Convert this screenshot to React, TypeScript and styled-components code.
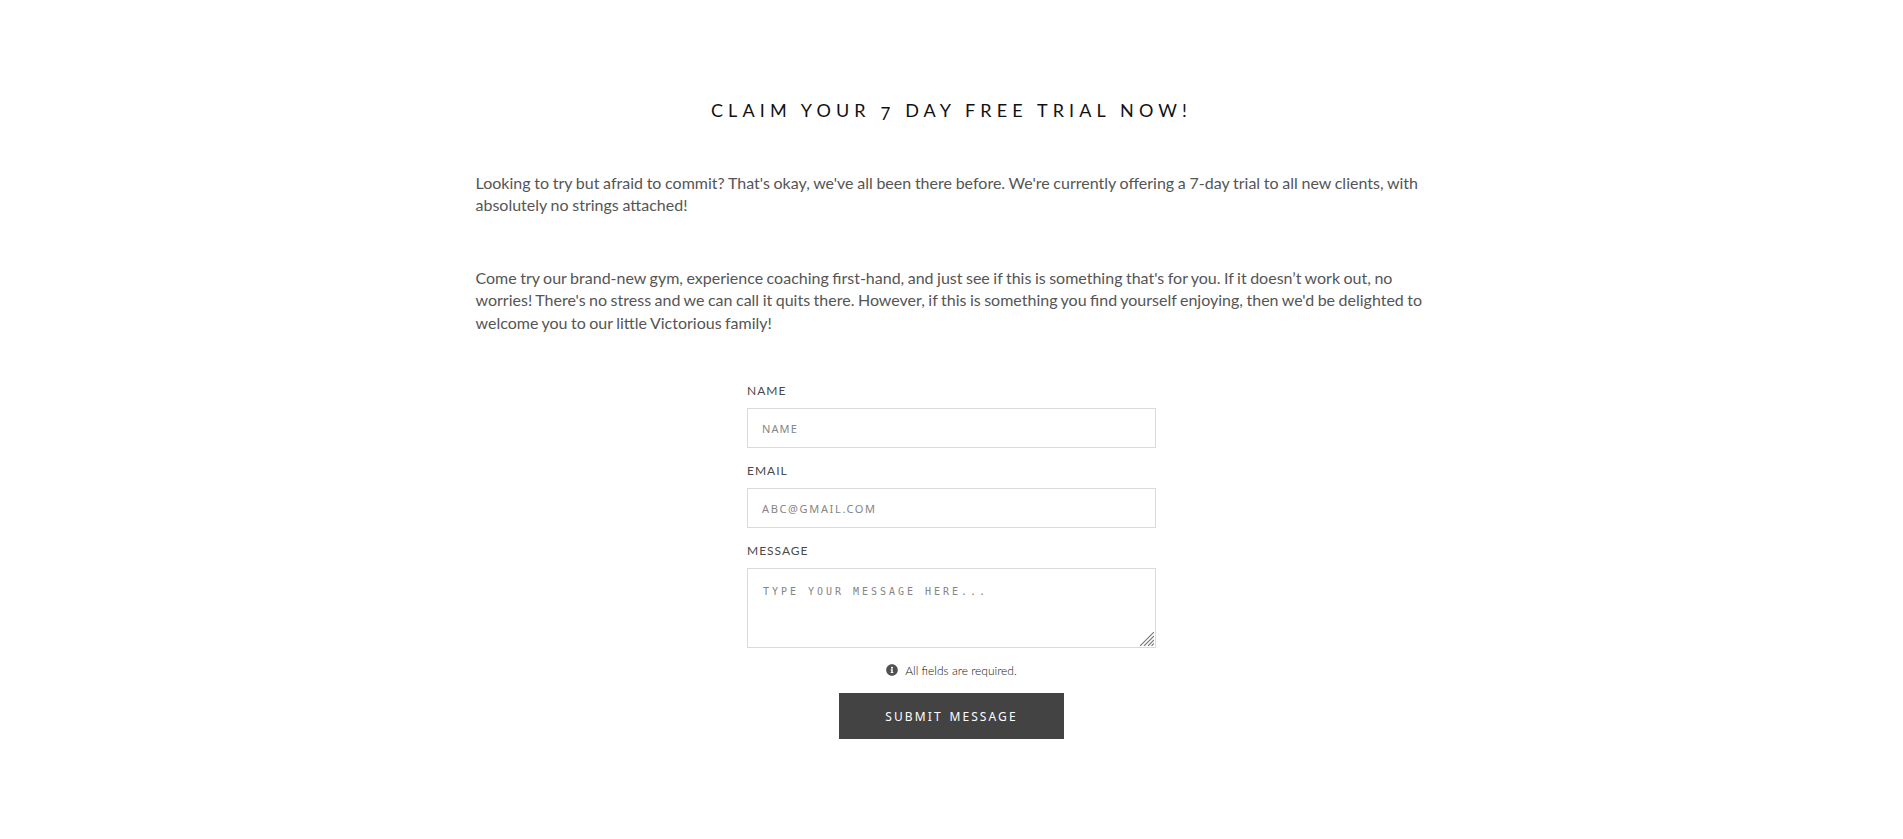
import React from "react";
import styled, { createGlobalStyle } from "styled-components";
import { FaInfoCircle } from "react-icons/fa";

const GlobalStyle = createGlobalStyle`
  body {
    margin: 0;
    background: #fff;
    color: #555;
    font-family: Lato, "Liberation Sans", sans-serif;
  }
  *, *::before, *::after { box-sizing: border-box; }
`;

const Section = styled.section`
  min-height: 839px;
  padding-top: 97px;
  display: flex;
  flex-direction: column;
  align-items: center;
`;

const Title = styled.h2`
  margin: 0;
  height: 27px;
  line-height: 27px;
  color: #111;
  font-size: 18px;
  font-weight: 400;
  letter-spacing: 5.12px;
  white-space: nowrap;
`;

const OldStyleFigure = styled.span`
  position: relative;
  top: 3px;
  font-size: 17px;
`;

const Copy = styled.div`
  width: 952px;
  margin-top: 48px;
`;

const Paragraph = styled.p<{ $wordSpacing: number }>`
  margin: 0 0 50px;
  font-size: 16px;
  line-height: 22.4px;
  word-spacing: ${(p) => p.$wordSpacing}px;
`;

const Form = styled.form`
  width: 409px;
  margin-top: -3px;
  display: flex;
  flex-direction: column;
`;

const Field = styled.label`
  display: flex;
  flex-direction: column;
  margin-bottom: 13px;
`;

const FieldLabel = styled.span`
  height: 27px;
  padding-top: 1px;
  line-height: 18px;
  font-size: 12px;
  font-weight: 400;
  letter-spacing: 1px;
  color: #4a4a4a;
`;

const Input = styled.input<{ $tracking: number }>`
  height: 40px;
  padding: 0 14px;
  border: 1px solid #dadada;
  border-radius: 0;
  background: #fff;
  outline: none;
  font-family: "Noto Sans", sans-serif;
  font-size: 11px;
  letter-spacing: ${(p) => p.$tracking}px;
  &::placeholder { color: #858585; opacity: 1; }
`;

const MessageWrap = styled.div`
  position: relative;
  display: flex;
`;

const MessageBox = styled.textarea`
  display: block;
  width: 100%;
  height: 80px;
  padding: 15px 15px;
  border: 1px solid #dadada;
  border-radius: 0;
  background: #fff;
  outline: none;
  resize: both;
  font-family: "DejaVu Sans Mono", monospace;
  font-size: 10px;
  line-height: 16px;
  letter-spacing: 2.98px;
  &::placeholder { color: #858585; opacity: 1; }
  &::-webkit-resizer { background: transparent; }
`;

const Grip = styled.svg`
  position: absolute;
  right: 2px;
  bottom: 2px;
  pointer-events: none;
`;

const Note = styled.div`
  display: flex;
  align-items: center;
  justify-content: center;
  gap: 7px;
  height: 18px;
  font-size: 12px;
  font-weight: 300;
  color: #111;
  svg { color: #505050; }
`;

const Submit = styled.button`
  align-self: center;
  width: 225px;
  height: 46px;
  margin-top: 14px;
  padding: 0;
  border: 0;
  background: #434343;
  color: #fff;
  font-family: "Noto Sans", sans-serif;
  font-size: 12px;
  letter-spacing: 2.1px;
  word-spacing: 1.5px;
`;

export default function App() {
  return (
    <>
      <GlobalStyle />
      <Section>
        <Title>
          CLAIM YOUR <OldStyleFigure>7</OldStyleFigure> DAY FREE TRIAL NOW!
        </Title>
        <Copy>
          <Paragraph $wordSpacing={-0.4}>
            Looking to try but afraid to commit? That's okay, we've all been there before. We're
            currently offering a 7-day trial to all new clients, with absolutely no strings attached!
          </Paragraph>
          <Paragraph $wordSpacing={-0.6}>
            Come try our brand-new gym, experience coaching first-hand, and just see if this is
            something that's for you. If it doesn’t work out, no worries! There's no stress and we
            can call it quits there. However, if this is something you find yourself enjoying, then
            we'd be delighted to welcome you to our little Victorious family!
          </Paragraph>
        </Copy>
        <Form onSubmit={(e) => e.preventDefault()}>
          <Field>
            <FieldLabel>NAME</FieldLabel>
            <Input type="text" placeholder="NAME" $tracking={1.1} />
          </Field>
          <Field>
            <FieldLabel>EMAIL</FieldLabel>
            <Input type="email" placeholder="ABC@GMAIL.COM" $tracking={1.65} />
          </Field>
          <Field>
            <FieldLabel>MESSAGE</FieldLabel>
            <MessageWrap>
              <MessageBox placeholder="TYPE YOUR MESSAGE HERE..." />
              <Grip width="14" height="14" viewBox="0 0 14 14" stroke="#777" strokeWidth="1.1">
                <path d="M0 14L14 0M4 14L14 4M8 14L14 8M11.5 14L14 11.5" />
              </Grip>
            </MessageWrap>
          </Field>
          <Note>
            <FaInfoCircle size={12} />
            <span>All fields are required.</span>
          </Note>
          <Submit type="submit">SUBMIT MESSAGE</Submit>
        </Form>
      </Section>
    </>
  );
}
